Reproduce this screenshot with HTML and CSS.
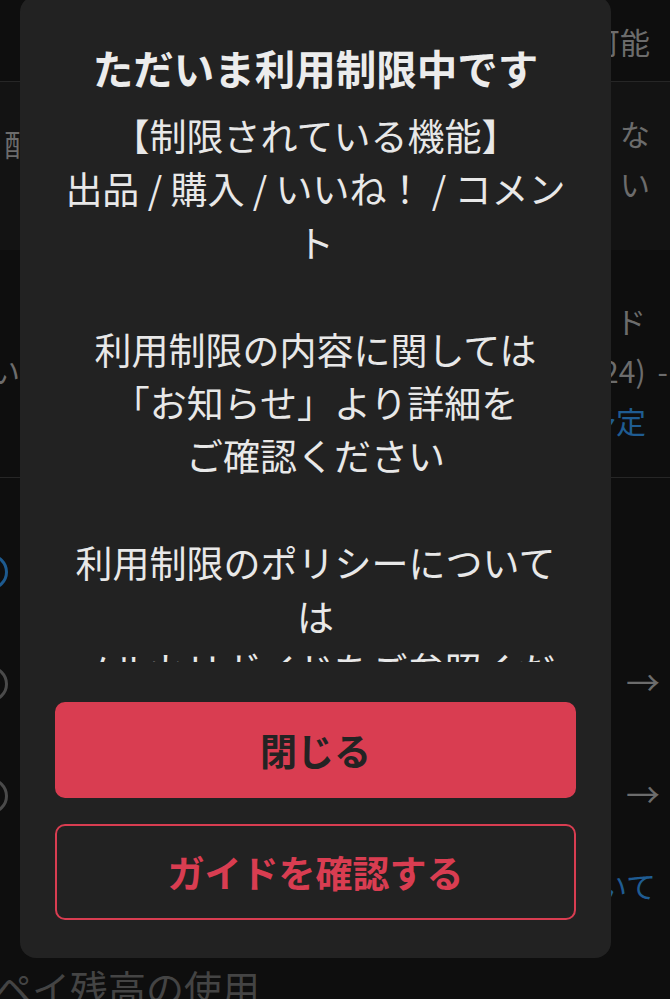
FILE: index.html
```html
<!DOCTYPE html>
<html lang="ja">
<head>
<meta charset="utf-8">
<title>利用制限</title>
<link rel="stylesheet" href="styles.css">
</head>
<body>
<div class="page">
  <div class="row row-top">
    <span class="muted">利用可能</span>
  </div>
  <div class="row row-band">
    <span class="muted edge-left">・配送</span>
    <span class="muted stack">な<br>い</span>
  </div>
  <div class="row row-pay">
    <span class="muted edge-left lower">支払い</span>
    <span class="stack">
      <span class="muted">ド</span>
      <span class="muted">(24)<span class="dash">-</span></span>
      <span class="link">予定</span>
    </span>
  </div>
  <div class="options">
    <div class="opt"><span class="radio on"></span></div>
    <div class="opt"><span class="radio"></span><span class="arrow">→</span></div>
    <div class="opt"><span class="radio"></span><span class="arrow">→</span></div>
    <div class="opt opt-link"><span class="link">について</span></div>
  </div>
  <div class="bottom-text">ルペイ残高の使用</div>
</div>

<div class="modal" role="dialog" aria-modal="true">
  <h1 class="modal-title">ただいま利用制限中です</h1>
  <div class="modal-body">
    <p>【制限されている機能】<br>出品 / 購入 / いいね！ / コメント</p>
    <p>利用制限の内容に関しては<br>「お知らせ」より詳細を<br>ご確認ください</p>
    <p>利用制限のポリシーについては<br>メルカリガイドをご参照ください</p>
  </div>
  <button class="btn btn-primary" type="button">閉じる</button>
  <button class="btn btn-outline" type="button">ガイドを確認する</button>
</div>
</body>
</html>
```

FILE: styles.css
```css
* { box-sizing: border-box; }
html, body {
  margin: 0;
  padding: 0;
  background: #0e0e0e;
  overflow: hidden;
}
body {
  font-family: "Noto Sans CJK JP", "Noto Sans", sans-serif;
  width: 670px;
  height: 999px;
}
.page {
  width: 670px;
  height: 999px;
  display: flex;
  flex-direction: column;
}
.page > * { flex-shrink: 0; }
.row {
  display: flex;
  justify-content: space-between;
  padding: 0 20px 0 0;
}
.muted { color: #6c6c6c; font-size: 30px; line-height: 50px; }
.link { color: #1f5c92; font-size: 30px; line-height: 50px; }
.row-top {
  height: 82px;
  align-items: center;
  justify-content: flex-end;
  border-bottom: 1px solid #262626;
}
.row-band {
  height: 168px;
  background: #131313;
  align-items: flex-start;
  padding-top: 96px;
}
.edge-left { margin-left: -40px; }
.row-band .edge-left { margin-top: -60px; margin-left: -26px; }
.stack { display: flex; flex-direction: column; align-items: flex-end; margin-top: -25px; }
.row-band .stack { margin-top: -70px; }
.row-pay {
  height: 228px;
  align-items: flex-start;
  padding-top: 70px;
  padding-right: 24px;
  border-bottom: 1px solid #262626;
}
.row-pay .stack { margin-top: -25px; }
.row-pay .lower { margin-top: 25px; margin-left: -70px; }
.dash { margin-right: -22px; margin-left: 12px; }
.options { display: flex; flex-direction: column; padding-top: 76px; }
.opt {
  height: 112px;
  display: flex;
  justify-content: space-between;
  align-items: flex-start;
  padding-right: 10px;
}
.radio {
  width: 36px;
  height: 36px;
  border-radius: 50%;
  border: 3px solid #4a4a4a;
  margin-left: -28px;
}
.radio.on { border-color: #1d5a8f; }
.arrow { color: #6c6c6c; font-size: 34px; line-height: 36px; margin-top: -2px; }
.opt-link { justify-content: flex-end; padding-right: 14px; padding-top: 0; }
.opt-link .link { margin-top: -30px; }
.bottom-text {
  color: #444444;
  font-size: 38px;
  line-height: 50px;
  margin-left: -44px;
  margin-top: -40px;
}

.modal {
  position: fixed;
  left: 20px;
  top: -4px;
  width: 591px;
  height: 962px;
  background: #222222;
  border-radius: 16px;
  padding: 42px 35px 38px;
  display: flex;
  flex-direction: column;
}
.modal-title {
  margin: 0 0 12px;
  font-size: 40.5px;
  line-height: 59px;
  font-weight: 700;
  color: #ececec;
  text-align: center;
}
.modal-body {
  height: 553px;
  overflow: hidden;
  padding: 0 6px;
  color: #e8e8e8;
  font-size: 37px;
  line-height: 53.4px;
  text-align: center;
}
.modal-body p { margin: 0 0 53.4px; }
.btn {
  height: 96px;
  border-radius: 10px;
  font-family: inherit;
  font-size: 37px;
  font-weight: 700;
  cursor: pointer;
}
.btn-primary {
  margin-top: 40px;
  background: #d93d51;
  border: 2px solid #d93d51;
  color: #232323;
}
.btn-outline {
  margin-top: 26px;
  background: transparent;
  border: 2px solid #d93d51;
  color: #d93d51;
}
```
